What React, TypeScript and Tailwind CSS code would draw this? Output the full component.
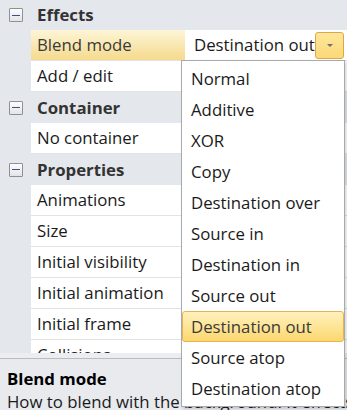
import React from "react";

const font = { fontFamily: '"Open Sans", "Noto Sans", sans-serif' };

type Row =
  | { kind: "header"; label: string }
  | { kind: "item"; label: string; value?: string; selected?: boolean };

const rows: Row[] = [
  { kind: "header", label: "Effects" },
  { kind: "item", label: "Blend mode", value: "Destination out", selected: true },
  { kind: "item", label: "Add / edit" },
  { kind: "header", label: "Container" },
  { kind: "item", label: "No container" },
  { kind: "header", label: "Properties" },
  { kind: "item", label: "Animations" },
  { kind: "item", label: "Size" },
  { kind: "item", label: "Initial visibility" },
  { kind: "item", label: "Initial animation" },
  { kind: "item", label: "Initial frame" },
  { kind: "item", label: "Collisions" },
];

const options = [
  "Normal",
  "Additive",
  "XOR",
  "Copy",
  "Destination over",
  "Source in",
  "Destination in",
  "Source out",
  "Destination out",
  "Source atop",
  "Destination atop",
];

function MinusBox() {
  return (
    <div className="flex h-[14px] w-[14px] items-center justify-center rounded-[1px] border border-[#8e9096] bg-gradient-to-b from-[#fdfdfd] to-[#e2e4e8]">
      <div className="h-px w-[8px] bg-[#3d4f8f]" />
    </div>
  );
}

export default function App() {
  return (
    <div
      className="relative h-[410px] w-[347px] overflow-hidden bg-[#e8eaee] text-[16.8px] text-[#1a1a1a]"
      style={font}
    >
      <div className="h-[353px] overflow-hidden bg-[#e4e7ec]">
        {rows.map((row, i) =>
          row.kind === "header" ? (
            <div
              key={row.label}
              className={`flex items-center bg-[#e4e7ec] ${i === 0 ? "h-[30px]" : "h-[31px]"}`}
            >
              <div className="flex w-[31px] justify-center pl-[1px]">
                <MinusBox />
              </div>
              <span className="pl-[6px] font-bold text-[#333333]">{row.label}</span>
            </div>
          ) : (
            <div key={row.label} className="flex h-[31px]">
              <div className="w-[31px] shrink-0" />
              <div
                className={`flex w-[154px] shrink-0 items-center border-b border-[#e3e3e3] pl-[6px] ${
                  row.selected
                    ? "bg-gradient-to-b from-[#fdf5d6] to-[#f5da8c] text-[#3a3a3a]"
                    : "bg-white"
                }`}
              >
                {row.label}
              </div>
              <div className="flex min-w-0 flex-1 items-center border-b border-[#e3e3e3] bg-white pl-[9px]">
                {row.value && (
                  <>
                    <span className="min-w-0 flex-1 overflow-hidden whitespace-nowrap">
                      {row.value}
                    </span>
                    <div className="mr-[3px] flex h-[27px] w-[29px] shrink-0 items-center justify-center rounded-[3px] border border-[#e0a646] bg-gradient-to-b from-[#fee69a] to-[#fcd977]">
                      <div className="h-0 w-0 border-x-[3px] border-t-[3px] border-x-transparent border-t-[#6f6f6f]" />
                    </div>
                  </>
                )}
              </div>
            </div>
          )
        )}
      </div>

      <div className="h-[6px] border-b border-[#b9bcc2] bg-[#ebedf0]" />
      <div className="px-[7px] pt-[8px]">
        <div className="font-bold leading-[23px] text-black">Blend mode</div>
        <div className="whitespace-nowrap leading-[23px]">
          How to blend with the background. It effects
        </div>
      </div>

      <div className="absolute left-[181px] top-[60px] w-[164px] border border-[#a7a9ad] bg-white py-[2px] shadow-[2px_2px_3px_rgba(0,0,0,0.15)]">
        {options.map((opt) =>
          opt === "Destination out" ? (
            <div
              key={opt}
              className="flex h-[31px] items-center rounded-[3px] border border-[#e5b450] bg-gradient-to-b from-[#fff1bd] to-[#fcd76c] pl-[8px] text-[#3a3a3a]"
            >
              {opt}
            </div>
          ) : (
            <div key={opt} className="flex h-[31px] items-center pl-[9px]">
              {opt}
            </div>
          )
        )}
      </div>
    </div>
  );
}
